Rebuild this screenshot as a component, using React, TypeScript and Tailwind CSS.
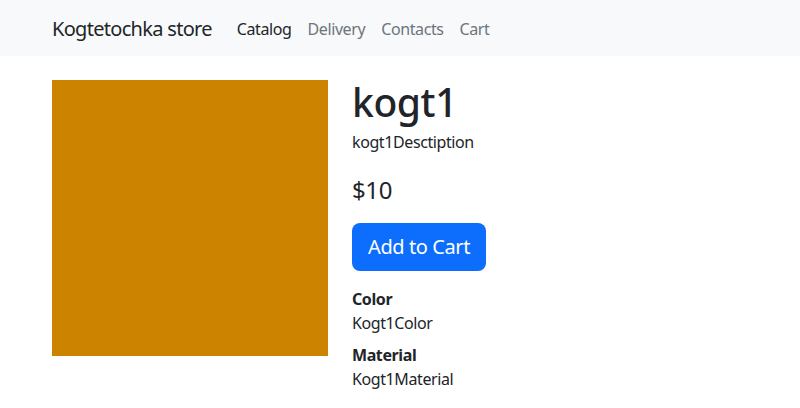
export default function App() {
  return (
    <div className="min-h-[408px] bg-white text-[#212529] tracking-[-0.025em]" style={{ fontFamily: '"Noto Sans", "Open Sans", sans-serif' }}>
      <nav className="h-[56px] bg-[#f8f9fa] flex items-center">
        <div className="w-[720px] mx-auto px-[12px] flex items-center mt-[2px]">
          <span className="text-[20px] leading-[30px] mr-[17px] text-[#212529] tracking-[-0.035em]">Kogtetochka store</span>
          <div className="flex text-[16px] leading-[24px]">
            <span className="px-[8px] text-[#212529]">Catalog</span>
            <span className="px-[8px] text-[#6c757d]">Delivery</span>
            <span className="px-[8px] text-[#6c757d]">Contacts</span>
            <span className="px-[8px] text-[#6c757d]">Cart</span>
          </div>
        </div>
      </nav>
      <div className="w-[720px] mx-auto px-[12px] mt-[24px] flex gap-[24px]">
        <div className="w-[276px] h-[276px] bg-[#cc8400] shrink-0" />
        <div className="flex flex-col items-start">
          <h1 className="text-[39px] leading-[44px] font-medium mb-[6px]">kogt1</h1>
          <p className="text-[16px] leading-[24px] mb-[21px]">kogt1Desctiption</p>
          <div className="text-[24px] leading-[29px] mb-[19px]">$10</div>
          <button className="bg-[#0d6efd] text-white text-[20px] leading-[30px] px-[16px] py-[9px] rounded-[8px] mb-[16px]">Add to Cart</button>
          <div className="text-[16px] leading-[24px] font-bold">Color</div>
          <div className="text-[16px] leading-[24px] mb-[8px]">Kogt1Color</div>
          <div className="text-[16px] leading-[24px] font-bold">Material</div>
          <div className="text-[16px] leading-[24px]">Kogt1Material</div>
        </div>
      </div>
    </div>
  );
}
